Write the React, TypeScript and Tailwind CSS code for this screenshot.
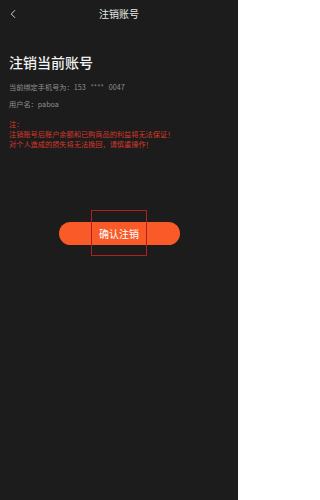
import { ChevronLeft } from "lucide-react";

const font = { fontFamily: '"Noto Sans CJK SC", "Noto Sans", sans-serif' };

export default function App() {
  return (
    <div className="w-[238px] h-[500px] bg-[#1c1c1c] text-white" style={font}>
      {/* header */}
      <div className="h-[28px] flex items-center">
        <div className="w-[30px] flex items-center pl-[6px]">
          <ChevronLeft className="w-[14px] h-[14px] text-[#d8d8d8]" strokeWidth={1.6} />
        </div>
        <div className="flex-1 text-center text-[10px] leading-[28px] text-[#e8e8e8]">注销账号</div>
        <div className="w-[30px]" />
      </div>

      <div className="px-[9px]">
        <h1 className="mt-[24px] text-[14px] leading-[20px] font-medium text-[#f2f2f2]">
          注销当前账号
        </h1>

        <div className="mt-[10px] text-[7.2px] leading-[10px] text-[#8f8f8f]">
          当前绑定手机号为：153&nbsp;&nbsp;&nbsp;****&nbsp;&nbsp;&nbsp;0047
        </div>
        <div className="mt-[7px] text-[7.2px] leading-[10px] text-[#8f8f8f]">用户名：paboa</div>

        <div className="mt-[10px] text-[7.2px] leading-[10px] text-[#d4382b]">
          <p>注：</p>
          <p>注销账号后账户余额和已购商品的利益将无法保证！</p>
          <p>对个人造成的损失将无法挽回，请慎重操作！</p>
        </div>
      </div>

      <div className="relative mx-auto mt-[70px] w-[121px]">
        <button className="w-full h-[23px] rounded-full bg-[#f95a28] text-[10px] text-white">
          确认注销
        </button>
        <div className="absolute left-[32px] top-[-9px] w-[56px] h-[46px] border border-[#b3201c]" />
      </div>
    </div>
  );
}
